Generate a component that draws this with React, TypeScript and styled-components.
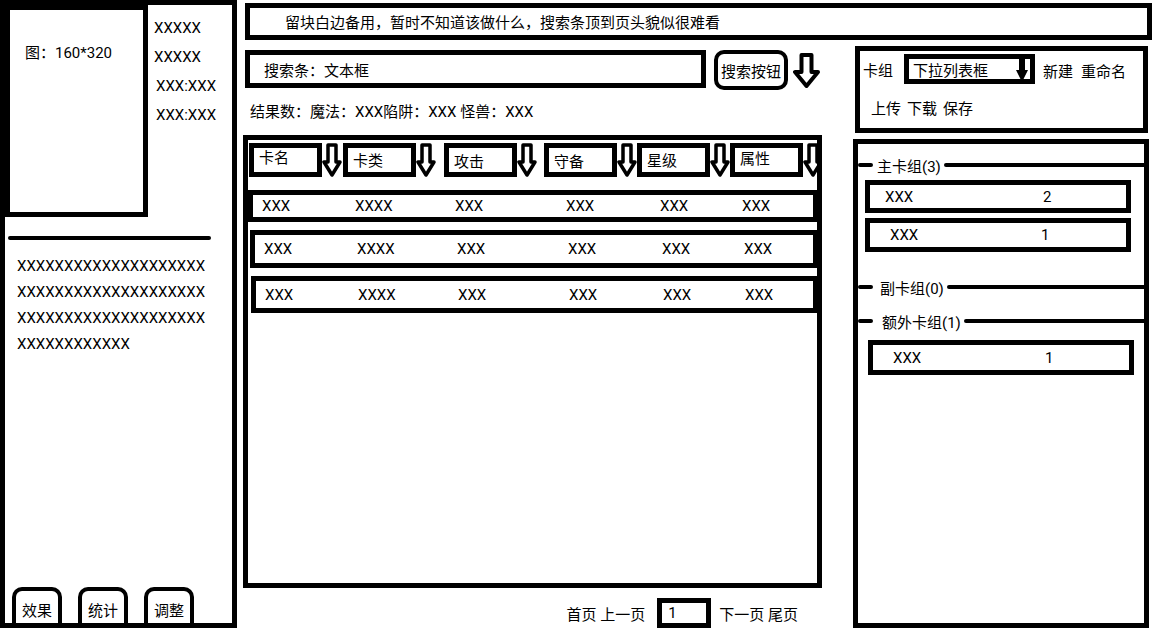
import { FC } from 'react'
import styled, { createGlobalStyle } from 'styled-components'

/*
 * Data
 */

const infoLines = [
    { text: 'XXXXX', indent: 0 },
    { text: 'XXXXX', indent: 0 },
    { text: 'XXX:XXX', indent: 2 },
    { text: 'XXX:XXX', indent: 2 },
]

const descriptionLines = [
    'XXXXXXXXXXXXXXXXXXXX',
    'XXXXXXXXXXXXXXXXXXXX',
    'XXXXXXXXXXXXXXXXXXXX',
    'XXXXXXXXXXXX',
]

const columns = [
    { label: '卡名', width: 94, top: 0 },
    { label: '卡类', width: 101, top: 3 },
    { label: '攻击', width: 100, top: 4 },
    { label: '守备', width: 93, top: 4 },
    { label: '星级', width: 93, top: 3 },
    { label: '属性', width: 100, top: 1 },
]

const cardRows = [
    { shift: 0, height: 32, top: 13, cells: ['XXX', 'XXXX', 'XXX', 'XXX', 'XXX', 'XXX'] },
    { shift: 2, height: 38, top: 8, cells: ['XXX', 'XXXX', 'XXX', 'XXX', 'XXX', 'XXX'] },
    { shift: 3, height: 37, top: 8, cells: ['XXX', 'XXXX', 'XXX', 'XXX', 'XXX', 'XXX'] },
]

/*
 * Styles
 */

const GlobalStyle = createGlobalStyle`
    html, body {
        margin: 0;
        padding: 0;
        background: #fff;
    }
    body {
        font-family: Roboto, "Noto Sans CJK SC", sans-serif;
        font-size: 15px;
        color: #000;
    }
    * {
        box-sizing: border-box;
    }
`

const Page = styled.div`
    display: flex;
    width: 1158px;
    height: 628px;
    overflow: hidden;
`

// left: card detail

const DetailPanel = styled.aside`
    width: 237px;
    height: 628px;
    border: 5px solid #000;
    display: flex;
    flex-direction: column;
    flex-shrink: 0;
`

const DetailTop = styled.div`
    display: flex;
`

const ImageBox = styled.div`
    width: 143px;
    height: 212px;
    border: 5px solid #000;
    padding: 33px 0 0 15px;
    line-height: 20px;
`

const InfoList = styled.div`
    margin-left: 6px;
    padding-top: 9px;
    line-height: 29px;
`

const InfoLine = styled.div<{ $indent: number }>`
    padding-left: ${(p) => p.$indent}px;
`

const Rule = styled.div`
    margin: 19px 0 0 3px;
    width: 203px;
    height: 4px;
    border-radius: 2px;
    background: #000;
`

const Description = styled.div`
    margin-top: 13px;
    padding-left: 12px;
    line-height: 26px;
`

const TabRow = styled.div`
    margin-top: auto;
    display: flex;
    gap: 16px;
    padding-left: 7px;
`

const TabButton = styled.div`
    width: 50px;
    height: 36px;
    border: 4px solid #000;
    border-bottom: none;
    border-radius: 10px 10px 0 0;
    display: flex;
    align-items: center;
    justify-content: center;
    padding-top: 4px;
`

// right of the detail panel

const Workspace = styled.div`
    flex: 1;
    display: flex;
    flex-direction: column;
`

const Banner = styled.header`
    margin: 3px 0 0 8px;
    width: 907px;
    height: 37px;
    border: 5px solid #000;
    padding-left: 35px;
    display: flex;
    align-items: center;
`

const Body = styled.div`
    flex: 1;
    display: flex;
`

// middle: search + list

const SearchColumn = styled.main`
    margin-left: 6px;
    width: 579px;
    padding-top: 10px;
    display: flex;
    flex-direction: column;
`

const SearchRow = styled.div`
    margin-left: 2px;
    display: flex;
    align-items: flex-start;
`

const SearchBox = styled.div`
    width: 461px;
    height: 38px;
    border: 5px solid #000;
    padding-left: 14px;
    display: flex;
    align-items: center;
`

const SearchButton = styled.div`
    margin-left: 8px;
    width: 74px;
    height: 40px;
    border: 4px solid #000;
    border-radius: 10px;
    display: flex;
    align-items: center;
    justify-content: center;
    white-space: nowrap;
`

const BigArrow = styled.svg`
    margin: 3px 0 0 5px;
    flex-shrink: 0;
`

const ResultLine = styled.div`
    margin-top: 12px;
    padding-left: 7px;
    height: 20px;
    line-height: 20px;
`

const CardTable = styled.section`
    margin-top: 13px;
    width: 579px;
    height: 453px;
    border: 5px solid #000;
    overflow: hidden;
    display: flex;
    flex-direction: column;
`

const HeaderRow = styled.div`
    display: flex;
    padding: 3px 0 0 1px;
`

const HeaderGroup = styled.div<{ $width: number }>`
    width: ${(p) => p.$width}px;
    display: flex;
    flex-shrink: 0;
`

const HeaderCell = styled.div<{ $top: number }>`
    width: 73px;
    height: 34px;
    border: 5px solid #000;
    padding: ${(p) => p.$top}px 0 0 5px;
    line-height: 20px;
    flex-shrink: 0;
`

const CardRow = styled.div<{ $shift: number; $height: number; $top: number }>`
    margin: ${(p) => p.$top}px 0 0 ${(p) => p.$shift}px;
    width: ${(p) => 570 - p.$shift}px;
    height: ${(p) => p.$height}px;
    border: 5px solid #000;
    padding-left: 9px;
    display: grid;
    grid-template-columns: 93px 100px 111px 94px 82px 1fr;
    align-items: center;
    flex-shrink: 0;
`

const Pager = styled.nav`
    margin-top: 10px;
    height: 30px;
    padding-right: 24px;
    display: flex;
    align-items: center;
    justify-content: flex-end;
    white-space: pre;
`

const PageBox = styled.div`
    width: 54px;
    height: 30px;
    border: 5px solid #000;
    margin: 0 8px 0 12px;
    padding-left: 6px;
    display: flex;
    align-items: center;
`

// right: deck

const DeckColumn = styled.div`
    margin-left: 31px;
    width: 296px;
    display: flex;
    flex-direction: column;
`

const DeckToolbar = styled.div`
    margin: 6px 0 0 2px;
    width: 293px;
    height: 87px;
    border: 5px solid #000;
    padding: 3px 0 0 3px;
`

const ToolbarRow = styled.div`
    display: flex;
    align-items: center;
`

const Select = styled.div`
    margin-left: 11px;
    width: 131px;
    height: 30px;
    border: 5px solid #000;
    padding: 0 2px 0 4px;
    display: flex;
    align-items: center;
    justify-content: space-between;
`

const Actions = styled.div<{ $gap: number }>`
    display: flex;
    gap: ${(p) => p.$gap}px;
`

const NewActions = styled(Actions)`
    margin: 3px 0 0 8px;
`

const FileActions = styled(Actions)`
    margin: 15px 0 0 8px;
    line-height: 20px;
`

const DeckPanel = styled.div`
    margin-top: 6px;
    flex: 1;
    border: 5px solid #000;
    padding-top: 11px;
    display: flex;
    flex-direction: column;
`

const SectionTitle = styled.div<{ $top: number }>`
    margin-top: ${(p) => p.$top}px;
    height: 20px;
    display: flex;
    align-items: center;
`

const Stub = styled.div`
    width: 15px;
    height: 4px;
    border-radius: 2px;
    background: #000;
`

const SectionLabel = styled.span<{ $gap: number }>`
    margin: 0 3px 0 ${(p) => p.$gap}px;
`

const SectionLine = styled.div`
    flex: 1;
    height: 4px;
    border-radius: 2px 0 0 2px;
    background: #000;
`

const DeckItem = styled.div<{ $shift: number; $height: number; $top: number; $pad: number }>`
    margin: ${(p) => p.$top}px 0 0 ${(p) => p.$shift}px;
    width: 266px;
    height: ${(p) => p.$height}px;
    border: 5px solid #000;
    padding-left: ${(p) => p.$pad}px;
    display: flex;
    align-items: center;
`

const ItemName = styled.span<{ $width: number }>`
    width: ${(p) => p.$width}px;
`

/*
 * Drawings
 */

const ColumnArrow = () => (
    <svg width="20" height="34" viewBox="0 0 20 34">
        <polygon
            points="6,2 14,2 14,19 18,19 10,32 2,19 6,19"
            fill="#fff"
            stroke="#000"
            strokeWidth="3.5"
            strokeLinejoin="round"
        />
    </svg>
)

const DropArrow = () => (
    <svg width="12" height="25" viewBox="0 0 12 25">
        <polygon points="3,1 9,1 9,13 12,13 6,25 0,13 3,13" fill="#000" />
    </svg>
)

/*
 * App
 */

const App: FC = () => {
    return (
        <Page>
            <GlobalStyle />

            <DetailPanel>
                <DetailTop>
                    <ImageBox>图：160*320</ImageBox>
                    <InfoList>
                        {infoLines.map((line, index) => (
                            <InfoLine key={index} $indent={line.indent}>
                                {line.text}
                            </InfoLine>
                        ))}
                    </InfoList>
                </DetailTop>
                <Rule />
                <Description>
                    {descriptionLines.map((line, index) => (
                        <div key={index}>{line}</div>
                    ))}
                </Description>
                <TabRow>
                    <TabButton>效果</TabButton>
                    <TabButton>统计</TabButton>
                    <TabButton>调整</TabButton>
                </TabRow>
            </DetailPanel>

            <Workspace>
                <Banner>留块白边备用，暂时不知道该做什么，搜索条顶到页头貌似很难看</Banner>

                <Body>
                    <SearchColumn>
                        <SearchRow>
                            <SearchBox>搜索条：文本框</SearchBox>
                            <SearchButton>搜索按钮</SearchButton>
                            <BigArrow width="27" height="35" viewBox="0 0 27 35">
                                <polygon
                                    points="8.5,2 18.5,2 18.5,19 25,19 13.5,33 2,19 8.5,19"
                                    fill="#fff"
                                    stroke="#000"
                                    strokeWidth="4"
                                    strokeLinejoin="round"
                                />
                            </BigArrow>
                        </SearchRow>

                        <ResultLine>结果数：魔法：XXX陷阱：XXX 怪兽：XXX</ResultLine>

                        <CardTable>
                            <HeaderRow>
                                {columns.map((col) => (
                                    <HeaderGroup key={col.label} $width={col.width}>
                                        <HeaderCell $top={col.top}>{col.label}</HeaderCell>
                                        <ColumnArrow />
                                    </HeaderGroup>
                                ))}
                            </HeaderRow>
                            {cardRows.map((row, index) => (
                                <CardRow
                                    key={index}
                                    $shift={row.shift}
                                    $height={row.height}
                                    $top={row.top}
                                >
                                    {row.cells.map((cell, i) => (
                                        <span key={i}>{cell}</span>
                                    ))}
                                </CardRow>
                            ))}
                        </CardTable>

                        <Pager>
                            <span>首页 上一页</span>
                            <PageBox>1</PageBox>
                            <span>下一页 尾页</span>
                        </Pager>
                    </SearchColumn>

                    <DeckColumn>
                        <DeckToolbar>
                            <ToolbarRow>
                                <span>卡组</span>
                                <Select>
                                    <span>下拉列表框</span>
                                    <DropArrow />
                                </Select>
                                <NewActions $gap={8}>
                                    <span>新建</span>
                                    <span>重命名</span>
                                </NewActions>
                            </ToolbarRow>
                            <FileActions $gap={6}>
                                <span>上传</span>
                                <span>下载</span>
                                <span>保存</span>
                            </FileActions>
                        </DeckToolbar>

                        <DeckPanel>
                            <SectionTitle $top={0}>
                                <Stub />
                                <SectionLabel $gap={4}>主卡组(3)</SectionLabel>
                                <SectionLine />
                            </SectionTitle>
                            <DeckItem $shift={7} $height={33} $top={5} $pad={15}>
                                <ItemName $width={158}>XXX</ItemName>
                                <span>2</span>
                            </DeckItem>
                            <DeckItem $shift={7} $height={34} $top={5} $pad={20}>
                                <ItemName $width={151}>XXX</ItemName>
                                <span>1</span>
                            </DeckItem>

                            <SectionTitle $top={25}>
                                <Stub />
                                <SectionLabel $gap={7}>副卡组(0)</SectionLabel>
                                <SectionLine />
                            </SectionTitle>

                            <SectionTitle $top={14}>
                                <Stub />
                                <SectionLabel $gap={9}>额外卡组(1)</SectionLabel>
                                <SectionLine />
                            </SectionTitle>
                            <DeckItem $shift={10} $height={35} $top={9} $pad={20}>
                                <ItemName $width={152}>XXX</ItemName>
                                <span>1</span>
                            </DeckItem>
                        </DeckPanel>
                    </DeckColumn>
                </Body>
            </Workspace>
        </Page>
    )
}

export default App
